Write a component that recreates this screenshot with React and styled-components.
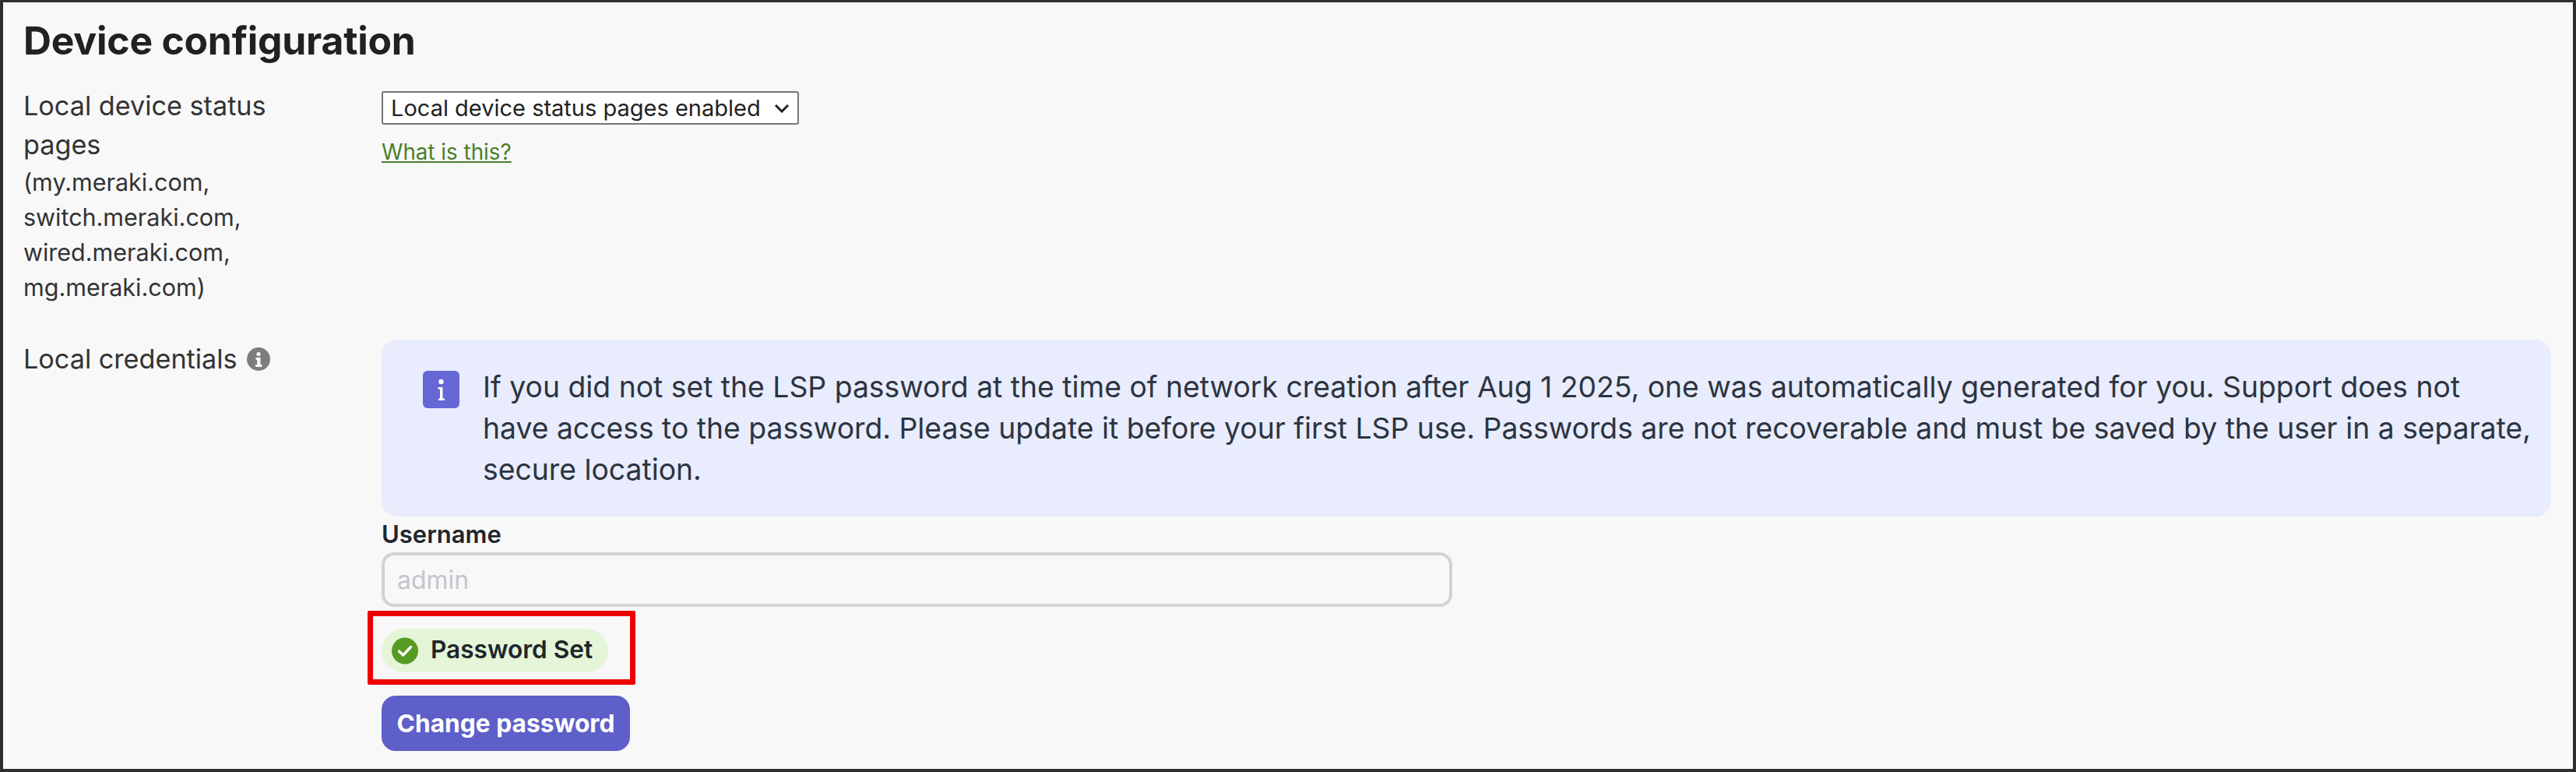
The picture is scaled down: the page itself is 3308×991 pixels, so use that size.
import styled, { createGlobalStyle } from 'styled-components';

const GlobalStyle = createGlobalStyle`
  html, body {
    margin: 0;
    padding: 0;
    background: #f8f8f8;
    font-family: Inter, "Noto Sans", "Liberation Sans", sans-serif;
    color: #25282c;
  }
`;

const InfoSquareIcon = () => (
  <svg width="47" height="48" viewBox="0 0 47 48">
    <rect width="47" height="48" rx="6" fill="#6467d4" />
    <circle cx="23.5" cy="14" r="3.2" fill="#fff" />
    <path d="M19.5 21h6v14.5h2.5V38h-8v-2.5h2V23.5h-2.5z" fill="#fff" />
  </svg>
);

const InfoCircleIcon = () => (
  <svg width="30" height="30" viewBox="0 0 30 30">
    <circle cx="15" cy="15" r="15" fill="#7d7d7d" />
    <circle cx="15" cy="8.5" r="2.6" fill="#f8f8f8" />
    <path d="M11.5 13h6v9h2v3h-8.5v-3h2.2v-6h-1.700z" fill="#f8f8f8" />
  </svg>
);

const CheckIcon = () => (
  <svg width="34" height="35" viewBox="0 0 34 35">
    <circle cx="17" cy="17.5" r="17" fill="#579a22" />
    <path d="M9.500 18l5.200 5L24.500 12.500" fill="none" stroke="#fff" strokeWidth="3.400" strokeLinecap="round" strokeLinejoin="round" />
  </svg>
);

const App = () => {
  return (
    <>
      <GlobalStyle />
      <Frame>
        <Heading>Device configuration</Heading>
        <Row>
          <Label>
            Local device status pages
            <Hosts>(my.meraki.com, switch.meraki.com, wired.meraki.com, mg.meraki.com)</Hosts>
          </Label>
          <SelectColumn>
            <StatusSelect defaultValue="enabled">
              <option value="enabled">Local device status pages enabled</option>
              <option value="disabled">Local device status pages disabled</option>
            </StatusSelect>
            <HelpLink href="#">What is this?</HelpLink>
          </SelectColumn>
        </Row>
        <CredentialsRow>
          <Label>
            Local credentials <InfoCircleIcon />
          </Label>
          <div>
            <Banner>
              <InfoSquareIcon />
              <BannerText>
                If you did not set the LSP password at the time of network creation after Aug 1 2025, one was automatically generated for you. Support does not have access to the password. Please update it before your first LSP use. Passwords are not recoverable and must be saved by the user in a separate, secure location.
              </BannerText>
            </Banner>
            <FieldLabel>Username</FieldLabel>
            <TextInput placeholder="admin" disabled />
            <PillWrap>
              <Pill>
                <CheckIcon />
                <PillText>Password Set</PillText>
              </Pill>
            </PillWrap>
            <ChangeButton>Change password</ChangeButton>
          </div>
        </CredentialsRow>
      </Frame>
    </>
  );
};

export default App;

const Frame = styled.div`
  box-sizing: border-box;
  height: 991px;
  border: 4px solid #2e2e2e;
  border-top-width: 3px;
  padding: 0 28px 0 26px;
  overflow: hidden;
`;

const Heading = styled.h1`
  margin: 20px 0 0;
  font-size: 49.800px;
  line-height: 58px;
  font-weight: 700;
  color: #212121;
  letter-spacing: -0.2px;
`;

const Row = styled.div`
  display: grid;
  grid-template-columns: 460px 1fr;
  margin-top: 30px;
`;

const CredentialsRow = styled(Row)`
  margin-top: 45px;
`;

const SelectColumn = styled.div`
  padding-top: 6px;
`;

const Label = styled.div`
  font-size: 34.200px;
  line-height: 50px;
  color: #333;
  padding-right: 90px;
  svg {
    vertical-align: -3px;
    margin-left: 3px;
  }
`;

const Hosts = styled.div`
  font-size: 30.500px;
  line-height: 45px;
  padding-right: 40px;
`;

const StatusSelect = styled.select`
  display: block;
  box-sizing: border-box;
  width: 536px;
  height: 43px;
  margin: 0;
  padding: 0 10px;
  font-family: inherit;
  font-size: 29px;
  color: #222;
  appearance: none;
  background: #fff url("data:image/svg+xml,%3Csvg xmlns='http://www.w3.org/2000/svg' width='20' height='12'%3E%3Cpath d='M2 2l8 8 8-8' fill='none' stroke='%23222' stroke-width='3'/%3E%3C/svg%3E") no-repeat right 10px center;
  border: 2px solid #767676;
  border-radius: 3px;
`;

const HelpLink = styled.a`
  display: inline-block;
  margin-top: 18px;
  font-size: 27.800px;
  line-height: 34px;
  color: #4a7f2b;
  text-decoration: underline;
`;

const Banner = styled.div`
  display: flex;
  align-items: flex-start;
  gap: 30px;
  box-sizing: border-box;
  height: 227px;
  padding: 40px 25px 0 53px;
  background: #e8ecfd;
  border-radius: 20px;
  svg {
    flex: none;
  }
`;

const BannerText = styled.div`
  font-size: 37.300px;
  line-height: 53px;
  margin-top: -6px;
  color: #2c3440;
`;

const FieldLabel = styled.div`
  margin-top: 3px;
  font-size: 31px;
  line-height: 40px;
  font-weight: 600;
  color: #21252b;
`;

const TextInput = styled.input`
  display: block;
  box-sizing: border-box;
  width: 1375px;
  height: 70px;
  margin-top: 3px;
  padding: 0 16px;
  font-family: inherit;
  font-size: 32px;
  background: transparent;
  border: 4px solid #d2d3d7;
  border-radius: 16px;
  &::placeholder {
    color: #c4c6cb;
    opacity: 1;
  }
`;

const PillWrap = styled.div`
  position: relative;
  width: fit-content;
  margin-top: 28px;
  &::after {
    content: '';
    position: absolute;
    left: -18px;
    top: -23px;
    width: 344px;
    height: 95px;
    box-sizing: border-box;
    border: 7px solid #ee0000;
    border-radius: 2px;
  }
`;

const Pill = styled.div`
  display: flex;
  align-items: center;
  gap: 16px;
  box-sizing: border-box;
  width: 291px;
  height: 56px;
  padding-left: 13px;
  background: #e4f5d8;
  border-radius: 28px;
  svg {
    flex: none;
  }
`;

const PillText = styled.span`
  padding-bottom: 3px;
  font-size: 31.600px;
  font-weight: 600;
  color: #21252b;
  white-space: nowrap;
`;

const ChangeButton = styled.button`
  display: block;
  box-sizing: border-box;
  width: 319px;
  height: 71px;
  margin-top: 30px;
  padding: 0;
  font-family: inherit;
  font-size: 31.700px;
  font-weight: 700;
  color: #fff;
  background: #5e5fc9;
  border: none;
  border-radius: 18px;
`;
